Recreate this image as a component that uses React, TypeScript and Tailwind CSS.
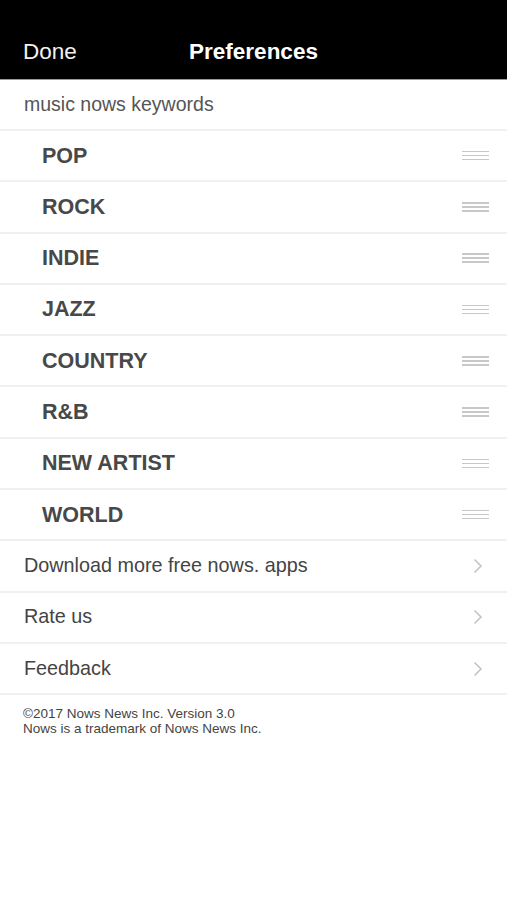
import React from "react";

const cats = ["POP", "ROCK", "INDIE", "JAZZ", "COUNTRY", "R&B", "NEW ARTIST", "WORLD"];
const links = ["Download more free nows. apps", "Rate us", "Feedback"];

function Handle() {
  return (
    <div className="flex flex-col gap-[2.5px] w-[27px]">
      <div className="h-[1.5px] bg-[#c8c8c8]" />
      <div className="h-[1.5px] bg-[#c8c8c8]" />
      <div className="h-[1.5px] bg-[#c8c8c8]" />
    </div>
  );
}

function Chevron() {
  return (
    <svg width="10" height="16" viewBox="0 0 10 16" fill="none">
      <path d="M1.5 1.5 L8 8 L1.5 14.5" stroke="#c4c4c8" strokeWidth="1.6" />
    </svg>
  );
}

export default function App() {
  return (
    <div className="w-[507px] h-[900px] bg-white font-['Liberation_Sans',Arial,sans-serif]">
      <div className="h-[80px] bg-black relative border-b border-[#9a9a9a]">
        <div className="absolute left-[23px] top-[38px] text-[22.5px] leading-[28px] text-[#f2f2f2]">Done</div>
        <div className="absolute left-0 right-0 top-[38px] text-center text-[22.5px] leading-[28px] font-semibold text-white">Preferences</div>
      </div>
      <div className="h-[51px] flex items-center pl-[24px] text-[19.5px] text-[#555] border-b-2 border-[#f0f0f0]">
        music nows keywords
      </div>
      {cats.map((c) => (
        <div key={c} className="h-[51.3px] flex items-center justify-between pl-[42px] pr-[18px] border-b-2 border-[#f0f0f0]">
          <span className="text-[21.5px] font-semibold text-[#484848]">{c}</span>
          <Handle />
        </div>
      ))}
      {links.map((l) => (
        <div key={l} className="h-[51.3px] flex items-center justify-between pl-[24px] pr-[24px] border-b-2 border-[#f0f0f0]">
          <span className="text-[19.8px] text-[#444]">{l}</span>
          <Chevron />
        </div>
      ))}
      <div className="pl-[23px] pt-[11px] text-[13.5px] leading-[15px] text-[#444]">
        <div>©2017 Nows News Inc. Version 3.0</div>
        <div>Nows is a trademark of Nows News Inc.</div>
      </div>
    </div>
  );
}
